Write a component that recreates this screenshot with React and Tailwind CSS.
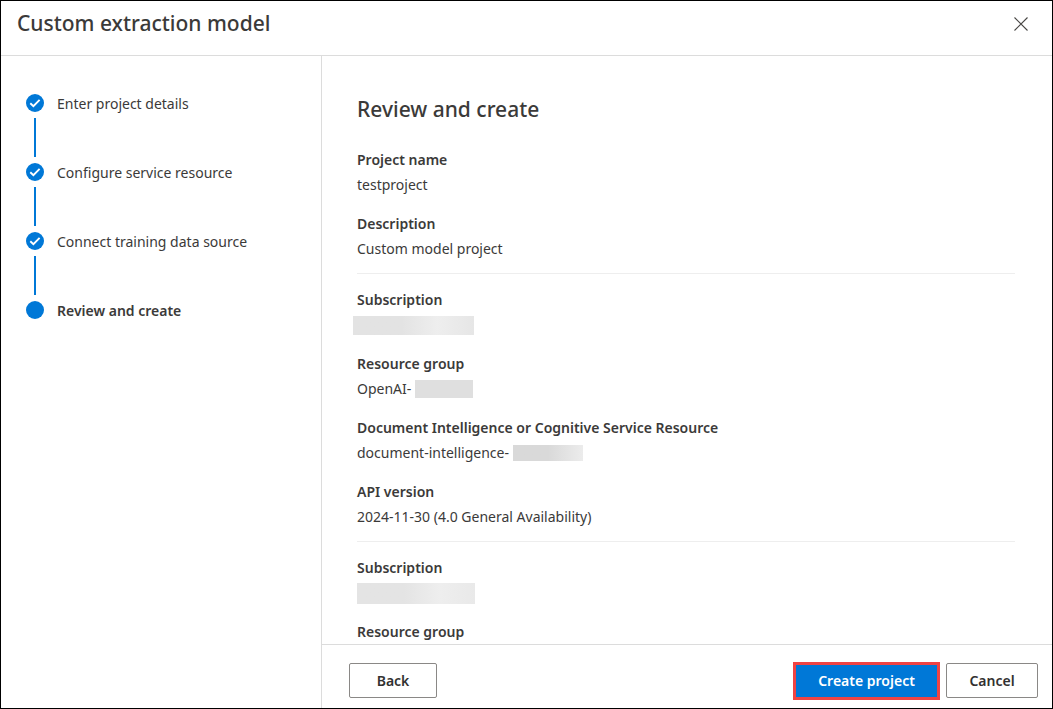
const steps = [
  { label: 'Enter project details', done: true },
  { label: 'Configure service resource', done: true },
  { label: 'Connect training data source', done: true },
  { label: 'Review and create', done: false },
];

function StepMark({ done }) {
  return (
    <svg viewBox="0 0 18 18" className="size-[18px] shrink-0" aria-hidden="true">
      <circle cx="9" cy="9" r="9" fill="#0078d7" />
      {done && <path d="M4.3 9.2 7.4 12.1 13.6 5.8" fill="none" stroke="#fff" strokeWidth="1.9" />}
    </svg>
  );
}

function Step({ label, done, last }) {
  return (
    <li className="flex gap-[13px]" aria-current={last ? 'step' : undefined}>
      <div className="flex flex-col items-center">
        <StepMark done={done} />
        {!last && <span className="my-1.5 h-[39px] w-0.5 bg-[#0078d7]" />}
      </div>
      <span className={last ? 'text-sm leading-5 font-semibold' : 'text-sm leading-5'}>{label}</span>
    </li>
  );
}

function Field({ label, children }) {
  return (
    <div>
      <dt className="text-sm leading-6 font-semibold">{label}</dt>
      <dd className="flex h-[26px] items-center text-sm">{children}</dd>
    </div>
  );
}

function Section({ children }) {
  return (
    <dl className="flex flex-col gap-3.5 border-b border-[#eeeeee] pb-[11px] last:border-b-0">{children}</dl>
  );
}

const outlineButton =
  'h-[35px] rounded-xs border border-[#8a8886] bg-white text-sm font-semibold text-[#323130]';

export default function App() {
  return (
    <div
      role="dialog"
      aria-labelledby="dialog-title"
      className="flex h-screen flex-col border border-black bg-white font-['Noto_Sans','Open_Sans',sans-serif] text-[#3b3a39]"
    >
      <header className="flex h-[55px] shrink-0 items-start justify-between border-b border-[#dcdcdc] pt-1.5 pr-[19px] pl-4">
        <h1 id="dialog-title" className="text-[21px] leading-8 font-medium">
          Custom extraction model
        </h1>
        <button type="button" aria-label="Close" className="mt-[5px] flex size-6 items-center justify-center">
          <svg viewBox="0 0 14 14" className="size-3.5" fill="none" stroke="#484644" strokeWidth="1.1">
            <path d="M.5.5l13 13M13.5.5l-13 13" />
          </svg>
        </button>
      </header>

      <div className="flex min-h-0 flex-1">
        <nav aria-label="Progress" className="w-80 shrink-0 pt-[38px] pl-[25px]">
          <ol>
            {steps.map((step, i) => (
              <Step key={step.label} {...step} last={i === steps.length - 1} />
            ))}
          </ol>
        </nav>

        <div className="flex min-w-0 flex-1 flex-col border-l border-[#dcdcdc]">
          <main className="min-h-0 flex-1 overflow-y-auto pt-[37px] pr-[37px] pl-[35px] [scrollbar-width:none]">
            <h2 className="mb-[23px] text-[21px] leading-8 font-medium">Review and create</h2>
            <div className="flex flex-col gap-3.5">
              <Section>
                <Field label="Project name">testproject</Field>
                <Field label="Description">Custom model project</Field>
              </Section>
              <Section>
                <Field label="Subscription">
                  <span className="-ml-1 h-[19px] w-[121px] bg-linear-to-r from-[#e3e3e3] from-40% via-[#eeeeee] via-70% to-[#e6e6e6]" />
                </Field>
                <Field label="Resource group">
                  OpenAI-
                  <span className="ml-1 h-[18px] w-[58px] bg-[#dfdfdf]" />
                </Field>
                <Field label="Document Intelligence or Cognitive Service Resource">
                  document-intelligence-
                  <span className="ml-1 h-4 w-[70px] bg-linear-to-r from-[#d9d9d9] from-50% to-[#ececec]" />
                </Field>
                <Field label="API version">2024-11-30 (4.0 General Availability)</Field>
              </Section>
              <Section>
                <Field label="Subscription">
                  <span className="h-[21px] w-[118px] bg-linear-to-r from-[#e4e4e4] from-40% via-[#eeeeee] via-70% to-[#e9e9e9]" />
                </Field>
                <Field label="Resource group" />
              </Section>
            </div>
          </main>

          <footer className="flex h-16 shrink-0 items-center justify-between border-t border-[#dcdcdc] pt-2 pr-3.5 pl-[27px]">
            <button type="button" className={`${outlineButton} w-[88px]`}>
              Back
            </button>
            <div className="flex items-center gap-1.5">
              <button
                type="button"
                className="h-[38px] w-[147px] border-3 border-[#f04343] bg-[#0078d7] text-sm font-semibold text-white"
              >
                Create project
              </button>
              <button type="button" className={`${outlineButton} w-[92px]`}>
                Cancel
              </button>
            </div>
          </footer>
        </div>
      </div>
    </div>
  );
}
